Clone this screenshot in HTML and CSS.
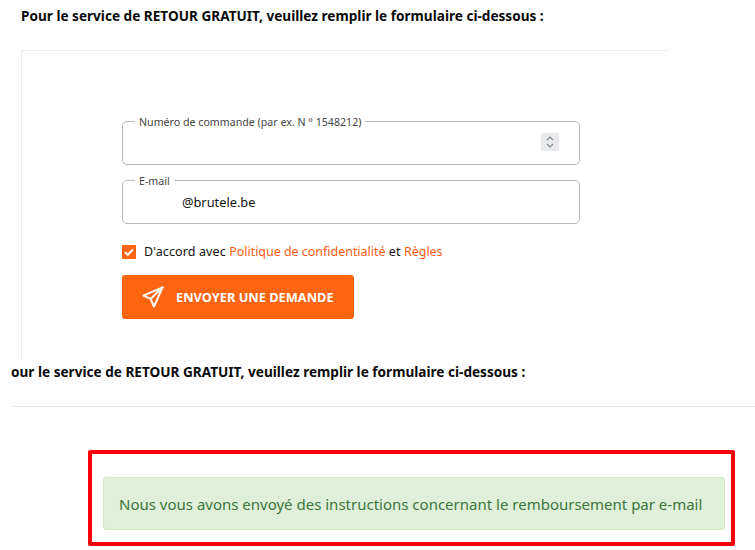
FILE: index.html
```html
<!DOCTYPE html>
<html lang="fr">
<head>
<meta charset="utf-8">
<title>Retour gratuit</title>
<link rel="stylesheet" href="styles.css">
</head>
<body>
<main class="page">
  <h2 class="title title-top">Pour le service de RETOUR GRATUIT, veuillez remplir le formulaire ci-dessous :</h2>
  <section class="card">
    <form class="form">
      <fieldset class="field">
        <legend class="legend">Numéro de commande (par ex. N ° 1548212)</legend>
        <div class="field-body">
          <span class="spinner">
            <svg width="10" height="16" viewBox="0 0 10 16" fill="none" stroke="#8a8d92" stroke-width="1.2"><path d="M2 6l3-3 3 3"/><path d="M2 10l3 3 3-3"/></svg>
          </span>
        </div>
      </fieldset>
      <fieldset class="field">
        <legend class="legend">E-mail</legend>
        <div class="field-body"><span class="value">@brutele.be</span></div>
      </fieldset>
      <div class="agree">
        <span class="check">
          <svg width="14" height="14" viewBox="0 0 14 14" fill="none" stroke="#fff" stroke-width="2"><path d="M3 7.2l2.8 2.6L11 4.4"/></svg>
        </span>
        <span>D'accord avec <a class="link">Politique de confidentialité</a> et <a class="link">Règles</a></span>
      </div>
      <div class="submit">
        <svg width="22" height="22" viewBox="0 0 24 24" fill="none" stroke="#fff" stroke-width="2.2" stroke-linejoin="round" stroke-linecap="round"><path d="M22.5 1.5L1.5 10.5l8 3.5 3.5 8.5z"/><path d="M22.5 1.5L9.5 14"/></svg>
        <span>ENVOYER UNE DEMANDE</span>
      </div>
    </form>
  </section>
  <h2 class="title title-second">our le service de RETOUR GRATUIT, veuillez remplir le formulaire ci-dessous :</h2>
  <hr class="rule">
  <div class="highlight">
    <div class="alert">Nous vous avons envoyé des instructions concernant le remboursement par e-mail</div>
  </div>
</main>
</body>
</html>
```

FILE: styles.css
```css
* { box-sizing: border-box; }
html, body { margin: 0; padding: 0; background: #fff; }
body { font-family: "Noto Sans", sans-serif; color: #111; overflow: hidden; }
.page { width: 755px; height: 550px; display: flex; flex-direction: column; overflow: hidden; }
.title { margin: 0; font-size: 13.6px; line-height: 18px; font-weight: 700; color: #0a0a0a; }
.title-top { padding: 7px 0 0 21px; }
.card { margin: 25px 0 0 21px; width: 649px; height: 310px; border-top: 1px solid #ececec; border-left: 1px solid #ececec; padding: 62px 0 0 100px; }
.form { width: 458px; display: flex; flex-direction: column; }
.field { margin: 0 0 7px; padding: 0 12px; height: 52px; border: 1px solid #b9b9b9; border-radius: 5px; min-width: 0; }
.legend { padding: 2px 4px 0; font-size: 10.65px; line-height: 14px; color: #444; }
.field-body { height: 28px; display: flex; align-items: center; justify-content: flex-end; margin-right: 8px; }
.spinner { width: 18px; height: 18px; margin-bottom: 2px; background: #e9eaee; display: flex; align-items: center; justify-content: center; }
.value { flex: 1; padding-left: 47px; font-size: 12.8px; color: #111; }
.agree { display: flex; align-items: center; gap: 8px; margin-top: 12px; font-size: 12.5px; line-height: 18px; letter-spacing: 0.12px; }
.check { width: 14px; height: 14px; background: #ff6411; border-radius: 1px; display: flex; }
.link { color: #ff5c14; letter-spacing: -0.03px; }
.submit { margin-top: 14px; width: 232px; height: 44px; background: #ff6411; border-radius: 3px; color: #fff; display: flex; align-items: center; gap: 12px; padding-left: 20px; font-size: 12.8px; font-weight: 700; }
.title-second { padding-left: 11px; margin-top: 3px; }
.rule { margin: 25px 0 0 11px; border: 0; border-top: 1px solid #e8e8e8; width: 744px; }
.highlight { margin: 43px 0 0 88px; width: 647px; height: 96px; border: 4px solid #f8000c; border-radius: 2px; padding: 23px 6px 0 11px; }
.alert { height: 53px; background: #dff0d8; border: 1px solid #d6e9c6; border-radius: 3px; color: #3c763d; font-size: 15px; line-height: 53px; padding-left: 15px; white-space: nowrap; }
```
